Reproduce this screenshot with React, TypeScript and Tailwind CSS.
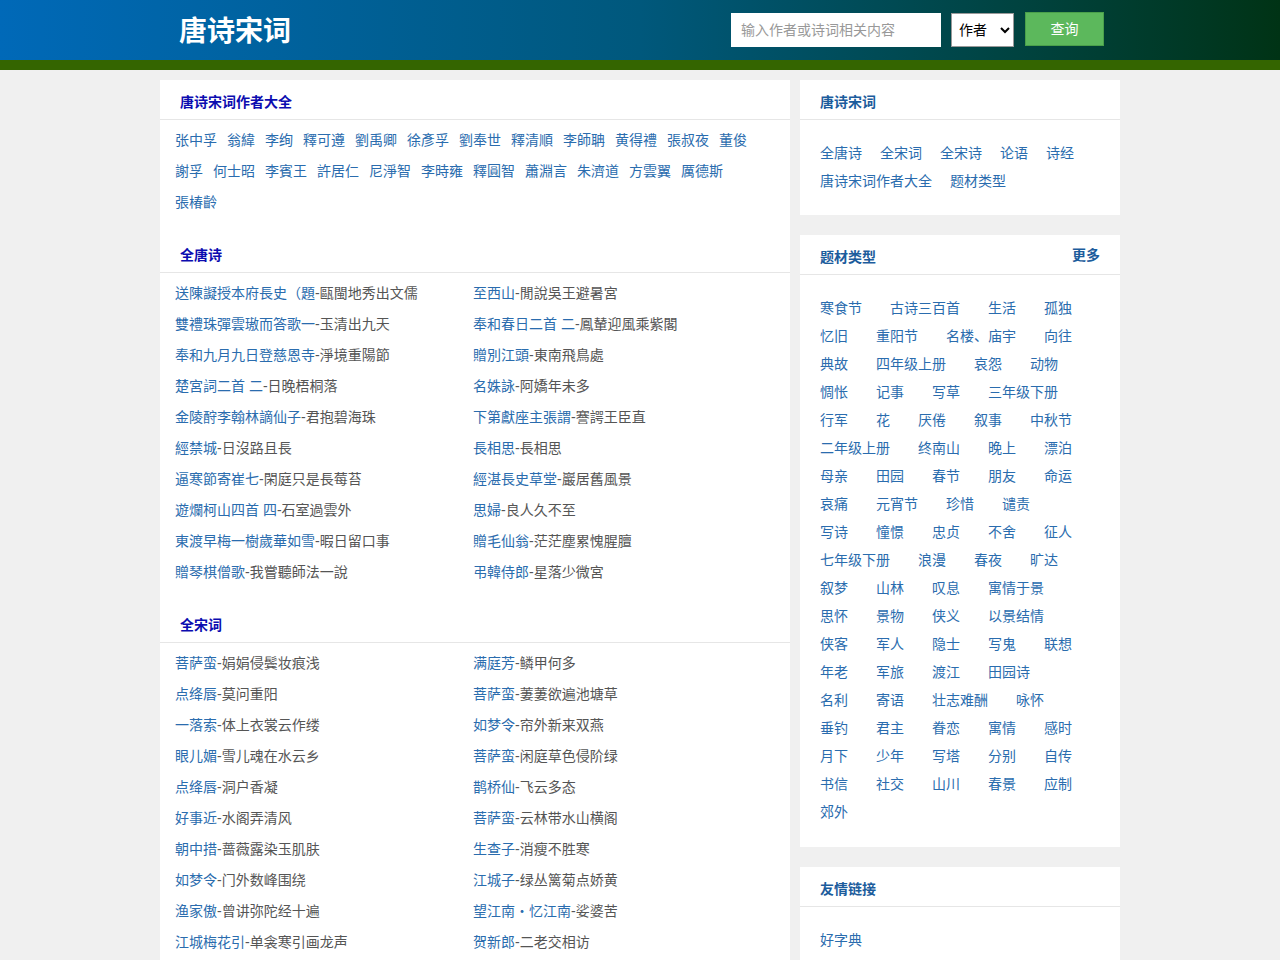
import React from "react";

const authors = [
  "张中孚", "翁緯", "李绚", "釋可遵", "劉禹卿", "徐彥孚", "劉奉世", "釋清順", "李師聃", "黄得禮", "張叔夜", "董俊",
  "謝孚", "何士昭", "李賓王", "許居仁", "尼淨智", "李時雍", "釋圓智", "蕭淵言", "朱濟道", "方雲翼", "厲德斯",
  "張椿齡",
];

const tang: [string, string][] = [
  ["送陳譺授本府長史（題", "甌閩地秀出文儒"],
  ["至西山", "閒說吳王避暑宮"],
  ["雙禮珠彈雲璈而答歌一", "玉清出九天"],
  ["奉和春日二首 二", "鳳輦迎風乘紫閣"],
  ["奉和九月九日登慈恩寺", "淨境重陽節"],
  ["贈別江頭", "東南飛鳥處"],
  ["楚宮詞二首 二", "日晚梧桐落"],
  ["名姝詠", "阿嬌年未多"],
  ["金陵酧李翰林謫仙子", "君抱碧海珠"],
  ["下第獻座主張謂", "謇諤王臣直"],
  ["經禁城", "日沒路且長"],
  ["長相思", "長相思"],
  ["逼寒節寄崔七", "閑庭只是長莓苔"],
  ["經湛長史草堂", "巖居舊風景"],
  ["遊爛柯山四首 四", "石室過雲外"],
  ["思婦", "良人久不至"],
  ["東渡早梅一樹歲華如雪", "暇日留口事"],
  ["贈毛仙翁", "茫茫塵累愧腥膻"],
  ["贈琴棋僧歌", "我嘗聽師法一說"],
  ["弔韓侍郎", "星落少微宮"],
];

const song: [string, string][] = [
  ["菩萨蛮", "娟娟侵鬓妆痕浅"],
  ["满庭芳", "鳞甲何多"],
  ["点绛唇", "莫问重阳"],
  ["菩萨蛮", "萋萋欲遍池塘草"],
  ["一落索", "体上衣裳云作缕"],
  ["如梦令", "帘外新来双燕"],
  ["眼儿媚", "雪儿魂在水云乡"],
  ["菩萨蛮", "闲庭草色侵阶绿"],
  ["点绛唇", "洞户香凝"],
  ["鹊桥仙", "飞云多态"],
  ["好事近", "水阁弄清风"],
  ["菩萨蛮", "云林带水山横阁"],
  ["朝中措", "蔷薇露染玉肌肤"],
  ["生查子", "消瘦不胜寒"],
  ["如梦令", "门外数峰围绕"],
  ["江城子", "绿丛篱菊点娇黄"],
  ["渔家傲", "曾讲弥陀经十遍"],
  ["望江南・忆江南", "娑婆苦"],
  ["江城梅花引", "单衾寒引画龙声"],
  ["贺新郎", "二老交相访"],
];

const topics = [
  "寒食节", "古诗三百首", "生活", "孤独",
  "忆旧", "重阳节", "名楼、庙宇", "向往",
  "典故", "四年级上册", "哀怨", "动物",
  "惆怅", "记事", "写草", "三年级下册",
  "行军", "花", "厌倦", "叙事", "中秋节",
  "二年级上册", "终南山", "晚上", "漂泊",
  "母亲", "田园", "春节", "朋友", "命运",
  "哀痛", "元宵节", "珍惜", "谴责",
  "写诗", "憧憬", "忠贞", "不舍", "征人",
  "七年级下册", "浪漫", "春夜", "旷达",
  "叙梦", "山林", "叹息", "寓情于景",
  "思怀", "景物", "侠义", "以景结情",
  "侠客", "军人", "隐士", "写鬼", "联想",
  "年老", "军旅", "渡江", "田园诗",
  "名利", "寄语", "壮志难酬", "咏怀",
  "垂钓", "君主", "眷恋", "寓情", "感时",
  "月下", "少年", "写塔", "分别", "自传",
  "书信", "社交", "山川", "春景", "应制",
  "郊外",
];

const quick = ["全唐诗", "全宋词", "全宋诗", "论语", "诗经", "唐诗宋词作者大全", "题材类型"];

function LeftHead({ title }: { title: string }) {
  return (
    <div className="h-[40px] pl-5 pt-3 border-b border-[#e6e6e6] box-border">
      <div className="h-[20px] text-[14px] leading-[20px] font-bold text-[#0c0cb0]">{title}</div>
    </div>
  );
}

function PoemList({ items }: { items: [string, string][] }) {
  return (
    <div className="grid grid-cols-[298px_298px] px-[15px] pt-[5px] pb-[15px]">
      {items.map(([t, l], i) => (
        <div key={i} className="h-[31px] leading-[31px] text-[14px] whitespace-nowrap overflow-hidden">
          <a className="text-[#2a6cae]">{t}</a>
          <span className="text-[#555555]">-{l}</span>
        </div>
      ))}
    </div>
  );
}

function RightHead({ title, more }: { title: string; more?: boolean }) {
  return (
    <div className="h-[40px] flex items-start justify-between px-5 pt-3 border-b border-[#e6e6e6] box-border">
      <div className="h-[20px] text-[14px] leading-[20px] font-bold text-[#1c5c9c]">{title}</div>
      {more && <div className="h-[20px] text-[14px] leading-[17px] font-bold text-[#1c5c9c]">更多</div>}
    </div>
  );
}

export default function App() {
  return (
    <div
      className="min-h-screen bg-[#f0f0f0] text-[14px]"
      style={{ fontFamily: '"Liberation Sans", "Noto Sans CJK SC", sans-serif' }}
    >
      <div className="h-[60px] bg-gradient-to-r from-[#0069b8] via-[#00587c] to-[#003315]">
        <div className="w-[960px] mx-auto h-full flex items-center">
          <div className="pl-[19px] pt-[4px] text-[28px] leading-[36px] font-bold text-white">唐诗宋词</div>
          <div className="ml-auto flex items-center pr-4">
            <input
              className="w-[210px] h-[34px] bg-white px-[10px] text-[14px] text-[#333] placeholder:text-[#999] outline-none"
              placeholder="输入作者或诗词相关内容"
            />
            <select className="ml-[10px] w-[63px] h-[34px] bg-white border border-[#999] text-[14px] text-black pl-[3px]">
              <option>作者</option>
            </select>
            <button className="ml-[11px] w-[79px] h-[34px] -mt-[2px] bg-[#5cb85c] border border-[#4a9f4a] text-white text-[14px]">
              查询
            </button>
          </div>
        </div>
      </div>
      <div className="h-[10px] bg-[#346500]" />

      <div className="w-[960px] mx-auto mt-[10px] flex gap-[10px] items-start">
        <div className="w-[630px] bg-white">
          <LeftHead title="唐诗宋词作者大全" />
          <div className="flex flex-wrap px-[15px] pt-[5px] pb-[15px]">
            {authors.map((a, i) => (
              <a key={i} className="mr-[10px] h-[31px] leading-[31px] text-[#2a6cae] whitespace-nowrap">
                {a}
              </a>
            ))}
          </div>
          <LeftHead title="全唐诗" />
          <PoemList items={tang} />
          <LeftHead title="全宋词" />
          <PoemList items={song} />
        </div>

        <div className="w-[320px] flex flex-col gap-5">
          <div className="bg-white">
            <RightHead title="唐诗宋词" />
            <div className="flex flex-wrap px-5 pt-[19px] pb-5">
              {quick.map((q, i) => (
                <a key={i} className="mr-[18px] h-[28px] leading-[28px] text-[#2a6cae] whitespace-nowrap">
                  {q}
                </a>
              ))}
            </div>
          </div>
          <div className="bg-white">
            <RightHead title="题材类型" more />
            <div className="flex flex-wrap w-[320px] px-5 pt-[19px] pb-[21px]">
              {topics.map((t, i) => (
                <a key={i} className="mr-[28px] h-[28px] leading-[28px] text-[#2a6cae] whitespace-nowrap">
                  {t}
                </a>
              ))}
            </div>
          </div>
          <div className="bg-white">
            <RightHead title="友情链接" />
            <div className="flex flex-wrap px-5 pt-[19px] pb-5">
              <a className="h-[28px] leading-[28px] text-[#2a6cae]">好字典</a>
            </div>
          </div>
        </div>
      </div>
    </div>
  );
}
